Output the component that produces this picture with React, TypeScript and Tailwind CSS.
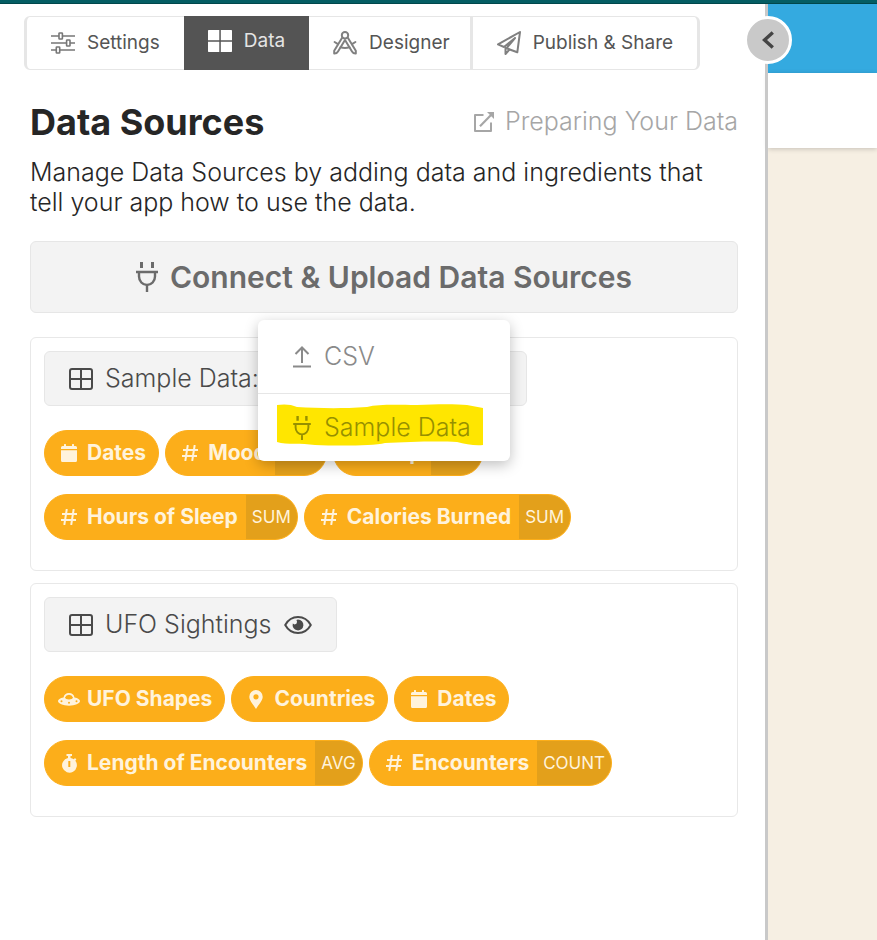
import type { ReactNode } from "react";

type IconProps = { className?: string };

function SlidersIcon({ className }: IconProps) {
  return (
    <svg viewBox="0 0 24 22" className={className} fill="none" stroke="currentColor" strokeWidth="1.6">
      <path d="M0 4h8M12 4h12M0 11h15M19 11h5M0 18h5M9 18h15" />
      <rect x="8" y="1" width="3.4" height="6" rx=".6" />
      <rect x="15.6" y="8" width="3.4" height="6" rx=".6" />
      <rect x="5.3" y="15" width="3.4" height="6" rx=".6" />
    </svg>
  );
}

function TilesIcon({ className }: IconProps) {
  return (
    <svg viewBox="0 0 24 22" className={className} fill="currentColor">
      <path d="M0 .6 .6 0H11.3V10.2H0zM12.8 0H23.4L24 .6V10.2H12.8zM0 11.8H11.3V22H.6L0 21.4zM12.8 11.8H24V21.4L23.4 22H12.8z" />
    </svg>
  );
}

function CompassIcon({ className }: IconProps) {
  return (
    <svg viewBox="0 0 24 24" className={className} fill="none" stroke="currentColor" strokeWidth="2" strokeLinejoin="round" strokeLinecap="round">
      <circle cx="12" cy="4.2" r="3.200" />
      <path d="M9.300 6.500 1.200 19.800V22.600Q3.600 22.800 5 20.400L12 9 19 20.400Q20.400 22.800 22.800 22.600V19.800L14.700 6.500" />
      <path d="M7.500 16.300Q12 17.600 16.500 16.300M1.600 11 5 13.200M22.400 11 19 13.200" />
    </svg>
  );
}

function PlaneIcon({ className }: IconProps) {
  return (
    <svg viewBox="0 0 24 24" className={className} fill="none" stroke="currentColor" strokeWidth="2" strokeLinejoin="round" strokeLinecap="round">
      <path d="M23 1 1 13.400 7 16 18 7 9.500 17.300 20.300 21.300z" />
      <path d="M8.500 16.800V23L12.400 18.600" />
    </svg>
  );
}

function ExternalIcon({ className }: IconProps) {
  return (
    <svg viewBox="0 0 20 20" className={className} fill="none" stroke="currentColor" strokeWidth="2">
      <path d="M9.500 3H1V19H17V10.500" strokeLinejoin="round" />
      <path d="M6 14.200 17.500 2.500" strokeWidth="2.200" />
      <path d="M13 0H20V7z" fill="currentColor" stroke="none" />
    </svg>
  );
}

function PlugIcon({ className }: IconProps) {
  return (
    <svg viewBox="0 0 22 30" className={className} fill="none" stroke="currentColor" strokeWidth="2.400">
      <path d="M5.500 0V6M16.500 0V6" strokeWidth="3" />
      <path d="M0 10H22M3 10V14.500A8 8.500 0 0 0 19 14.500V10M11 23V30" />
    </svg>
  );
}

function GridIcon({ className }: IconProps) {
  return (
    <svg viewBox="0 0 24 22" className={className} fill="none" stroke="currentColor" strokeWidth="2">
      <rect x="1" y="1" width="22" height="20" rx="2" />
      <path d="M12 1V21M1 11H23" />
    </svg>
  );
}

function EyeIcon({ className }: IconProps) {
  return (
    <svg viewBox="0 0 28 20" className={className} fill="none" stroke="currentColor" strokeWidth="2">
      <path d="M1.200 10C4 5 8.500 2 14 2S24 5 26.800 10C24 15 19.500 18 14 18S4 15 1.200 10z" strokeLinejoin="round" />
      <path d="M14 4.600A5.400 5.400 0 1 1 8.800 8.600Q9.600 9.400 10.600 9.400Q13 9.400 13 7Q13 5.600 12.400 4.900z" fill="currentColor" stroke="none" />
    </svg>
  );
}

function UploadIcon({ className }: IconProps) {
  return (
    <svg viewBox="0 0 18 22" className={className} fill="none" stroke="currentColor" strokeWidth="2">
      <path d="M9 17V2M2.500 8 9 1.500 15.500 8M0 20.500H18" />
    </svg>
  );
}

function CalendarIcon() {
  return (
    <svg viewBox="0 0 16 18" className="h-[18px] w-4" fill="currentColor">
      <path d="M1.500 2H3V.6Q3 0 3.600 0H4.400Q5 0 5 .6V2H11V.6Q11 0 11.600 0H12.400Q13 0 13 .6V2H14.500Q16 2 16 3.500V5H0V3.500Q0 2 1.500 2zM0 6.200H16V16.500Q16 18 14.500 18H1.500Q0 18 0 16.500z" />
    </svg>
  );
}

function HashIcon() {
  return (
    <svg viewBox="0 0 16 16" className="size-4" fill="none" stroke="currentColor" strokeWidth="2">
      <path d="M5.800 0 3.300 16M12.700 0 10.200 16M1 5H16M0 11H15" />
    </svg>
  );
}

function PinIcon() {
  return (
    <svg viewBox="0 0 14 19" className="h-[19px] w-[14px]" fill="currentColor" fillRule="evenodd">
      <path d="M7 0A6.700 6.700 0 0 0 .3 6.700C.3 10.500 4 14 7 19C10 14 13.700 10.500 13.700 6.700A6.700 6.700 0 0 0 7 0zM7 4.200A2.600 2.600 0 1 1 7 9.400A2.600 2.600 0 1 1 7 4.200z" />
    </svg>
  );
}

function StopwatchIcon() {
  return (
    <svg viewBox="0 0 15 19" className="h-[19px] w-[15px]" fill="currentColor" fillRule="evenodd">
      <path d="M4.500 0H10V2H8.500V4A7.300 7.300 0 0 1 11.800 5.300L13 4 14.400 5.400 13.300 6.700A7.400 7.400 0 1 1 6 4V2H4.500zM6.300 7V13H8.300V7z" />
    </svg>
  );
}

function UfoIcon() {
  return (
    <svg viewBox="0 0 22 14" className="h-[14px] w-[22px] shrink-0" fill="currentColor" fillRule="evenodd">
      <path d="M5.500 5.500A5.600 5.600 0 0 1 16.500 5.500C20 6.200 22 7.400 22 9C22 11.500 17 13.700 11 13.700S0 11.500 0 9C0 7.400 2 6.200 5.500 5.500zM7 5.500C7.200 8 14.800 8 15 5.500A4.300 4.300 0 0 0 7 5.500zM3.500 8.200A1 1 0 1 0 3.500 10.200A1 1 0 1 0 3.500 8.200zM11 9.800A1 1 0 1 0 11 11.800A1 1 0 1 0 11 9.800zM18.500 8.200A1 1 0 1 0 18.500 10.200A1 1 0 1 0 18.500 8.200z" />
    </svg>
  );
}

function Pill({ icon, label, aggregate }: { icon: ReactNode; label: string; aggregate?: string }) {
  return (
    <button
      type="button"
      className="flex h-[46px] items-stretch overflow-hidden rounded-full border border-[#fcae1a] bg-[#fcae1a] pl-3 text-[#fff3dc]"
    >
      <span className="flex items-center gap-[6px] pr-2">
        <span className="flex w-6 justify-center">{icon}</span>
        <span className="text-[21px] font-bold">{label}</span>
      </span>
      {aggregate ? (
        <span className="flex items-center bg-[#e3a01b] px-[6px] pt-[2px] text-[17px]">{aggregate}</span>
      ) : (
        <span className="w-1" />
      )}
    </button>
  );
}

function SourceCard({ header, children }: { header: ReactNode; children: ReactNode }) {
  return (
    <section className="rounded-md border border-[#e8e8e8] px-[13px] pt-[13px] pb-[30px]">
      {header}
      <div className="mt-6 flex flex-col gap-[18px]">{children}</div>
    </section>
  );
}

function PillRow({ children }: { children: ReactNode }) {
  return <div className="flex gap-[6px]">{children}</div>;
}

export default function App() {
  return (
    <div className="flex min-h-screen flex-col bg-white font-['Inter','Liberation_Sans',sans-serif] text-[#262626]">
      <div className="h-1 border-b border-[#00474b] bg-[#045d63]" />
      <div className="flex flex-1">
        <main className="relative w-[768px] shrink-0 border-r-[3px] border-[#c9c9c9] pr-[27px] pl-[30px]">
          <nav className="mt-3 -ml-[6px] flex h-[54px] w-fit rounded-md border border-r-[3px] border-l-[3px] border-[#e6e6e6] text-[19px] text-[#555]">
            <button type="button" className="flex items-center gap-3 px-6">
              <SlidersIcon className="h-[22px] w-6 text-[#777]" />
              Settings
            </button>
            <button type="button" className="-my-px flex items-center gap-3 bg-[#545454] px-6 pb-1 text-[#e4e4e4]">
              <TilesIcon className="h-[22px] w-6 text-white" />
              Data
            </button>
            <button type="button" className="flex items-center gap-3 border-r-[3px] border-[#e6e6e6] pr-[20px] pl-6">
              <CompassIcon className="size-6 text-[#808080]" />
              Designer
            </button>
            <button type="button" className="flex items-center gap-3 px-6">
              <PlaneIcon className="size-6 text-[#808080]" />
              Publish &amp; Share
            </button>
          </nav>

          <header className="mt-[30px] flex h-11 items-center justify-between">
            <h1 className="text-[36px] font-bold">Data Sources</h1>
            <a href="#preparing" className="flex items-center gap-[11px] text-[25px] font-light text-[#a6a6a6]">
              <ExternalIcon className="size-5" />
              Preparing Your Data
            </a>
          </header>
          <p className="mt-[13px] text-[25px] leading-[30px] font-light">
            Manage Data Sources by adding data and ingredients that
            <br />
            tell your app how to use the data.
          </p>

          <div className="relative mt-6">
            <button
              type="button"
              className="flex h-[72px] w-full items-center justify-center gap-3 rounded-md border border-[#e6e6e6] bg-[#f3f3f3] text-[30px] font-semibold text-[#6b6b6b]"
            >
              <PlugIcon className="h-[30px] w-[22px]" />
              Connect &amp; Upload Data Sources
            </button>
            <div className="absolute top-full left-1/2 z-10 mt-[7px] w-[252px] -translate-x-1/2 rounded-md bg-white text-[25px] font-light shadow-[0_4px_14px_rgba(0,0,0,0.25)]">
              <button type="button" className="flex h-[74px] w-full items-center gap-[13px] border-b border-[#e6e6e6] pl-[35px] text-[#8a8a8a]">
                <UploadIcon className="h-[22px] w-[18px]" />
                CSV
              </button>
              <button type="button" className="relative flex h-[67px] w-full items-center gap-[13px] pl-[35px] text-[#969000]">
                <svg viewBox="0 0 206 42" className="absolute top-[10px] left-[19px] h-[42px] w-[206px]" fill="#ffe600">
                  <path d="M0 1C6 0 14 0 20 3C40 4 60 5 90 3C102 0 120 1 140 1C160 0 180 0 190 1L206 4V41C198 42 188 40 180 38C160 37 130 38 108 39C96 42 60 42 38 41C24 39 10 41 0 38z" />
                </svg>
                <PlugIcon className="relative h-6 w-[18px]" />
                <span className="relative">Sample Data</span>
              </button>
            </div>
          </div>

          <div className="mt-6 flex flex-col gap-3">
            <SourceCard
              header={
                <button
                  type="button"
                  className="flex h-[55px] w-[483px] items-center gap-3 rounded-md border border-[#e6e6e6] bg-[#f3f3f3] px-6 text-[25px] font-light text-[#4a4a4a]"
                >
                  <GridIcon className="h-[22px] w-6" />
                  Sample Data:
                </button>
              }
            >
              <PillRow>
                <Pill icon={<CalendarIcon />} label="Dates" />
                <Pill icon={<HashIcon />} label="Mood" aggregate="SUM" />
                <Pill icon={<HashIcon />} label="Step" aggregate="SUM" />
              </PillRow>
              <PillRow>
                <Pill icon={<HashIcon />} label="Hours of Sleep" aggregate="SUM" />
                <Pill icon={<HashIcon />} label="Calories Burned" aggregate="SUM" />
              </PillRow>
            </SourceCard>
            <SourceCard
              header={
                <button
                  type="button"
                  className="flex h-[55px] items-center gap-3 rounded-md border border-[#e6e6e6] bg-[#f3f3f3] px-6 text-[25px] font-light text-[#4a4a4a]"
                >
                  <GridIcon className="h-[22px] w-6" />
                  UFO Sightings
                  <EyeIcon className="h-5 w-7" />
                </button>
              }
            >
              <PillRow>
                <Pill icon={<UfoIcon />} label="UFO Shapes" />
                <Pill icon={<PinIcon />} label="Countries" />
                <Pill icon={<CalendarIcon />} label="Dates" />
              </PillRow>
              <PillRow>
                <Pill icon={<StopwatchIcon />} label="Length of Encounters" aggregate="AVG" />
                <Pill icon={<HashIcon />} label="Encounters" aggregate="COUNT" />
              </PillRow>
            </SourceCard>
          </div>

          <button
            type="button"
            aria-label="Collapse panel"
            className="absolute top-3 -right-[27px] z-10 flex size-12 items-center justify-center rounded-full border-[3px] border-white bg-[#c9c9c9] text-[#444]"
          >
            <svg viewBox="0 0 12 18" className="h-[18px] w-3" fill="none" stroke="currentColor" strokeWidth="3.400">
              <path d="M10.800 1.500 2.500 9 10.800 16.500" />
            </svg>
          </button>
        </main>
        <aside className="flex flex-1 flex-col bg-[#f6efe3]">
          <div className="h-[69px] bg-[#34aae0]" />
          <div className="h-[75px] bg-white shadow-[0_1px_5px_rgba(0,0,0,0.2)]" />
        </aside>
      </div>
    </div>
  );
}
